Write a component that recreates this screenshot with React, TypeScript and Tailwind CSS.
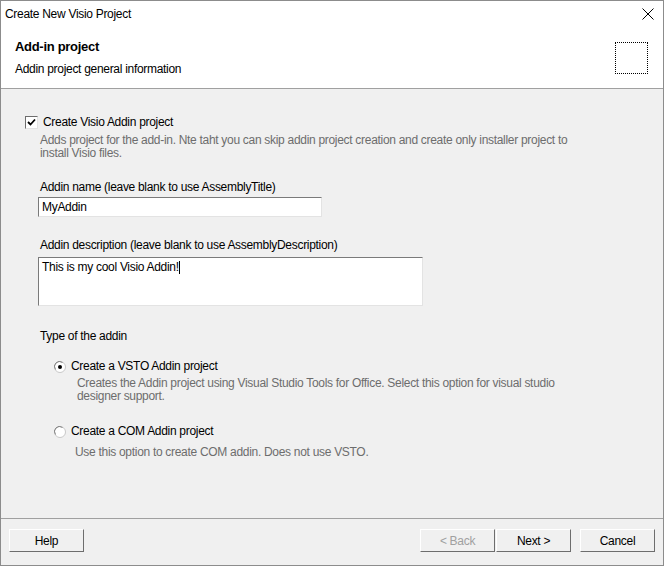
import React from 'react';

function Checkbox({ checked }: { checked: boolean }) {
    return (
        <div className="w-[13px] h-[13px] border border-t-[#6d6d6d] border-l-[#6d6d6d] border-b-[#e3e3e3] border-r-[#e3e3e3] bg-white flex items-center justify-center shrink-0">
            {checked && (
                <svg width="9" height="9" viewBox="0 0 9 9">
                    <path d="M1 4 L3.5 6.5 L8 1.5" stroke="#000" strokeWidth="1.8" fill="none" />
                </svg>
            )}
        </div>
    );
}

function Radio({ checked }: { checked: boolean }) {
    return (
        <svg width="12" height="12" viewBox="0 0 12 12" className="shrink-0">
            <circle cx="6" cy="6" r="5.5" fill="#fff" stroke="#c8c8c8" />
            <path d="M1.5 8.5 A5 5 0 0 1 8.5 1.5" stroke="#808080" fill="none" />
            {checked && <circle cx="6" cy="6" r="2" fill="#000" />}
        </svg>
    );
}

function WinButton({ children, disabled }: { children: React.ReactNode; disabled?: boolean }) {
    return (
        <button
            className={
                'w-[75px] h-[23px] bg-[#f0f0f0] border border-t-white border-l-white border-b-[#6d6d6d] border-r-[#6d6d6d] text-[12px] leading-none tracking-[-0.3px] ' +
                (disabled ? 'text-[#a0a0a0]' : 'text-black')
            }
        >
            {children}
        </button>
    );
}

export default function App() {
    return (
        <div className="w-[664px] h-[566px] border border-[#8c8c8c] bg-[#f0f0f0] flex flex-col text-[12px] tracking-[-0.3px] text-black font-['Liberation_Sans',Arial,sans-serif]">
            {/* header */}
            <div className="h-[88px] bg-white border-b border-[#a0a0a0] shrink-0 flex flex-col">
                <div className="h-[25px] flex items-center justify-between pl-[4px] pr-[9px]">
                    <span>Create New Visio Project</span>
                    <svg width="12" height="12" viewBox="0 0 12 12">
                        <path d="M0.5 0.5 L11.5 11.5 M11.5 0.5 L0.5 11.5" stroke="#000" strokeWidth="1" />
                    </svg>
                </div>
                <div className="flex justify-between pl-[14px] pr-[15px] pt-[13px]">
                    <div className="flex flex-col">
                        <span className="font-bold text-[13px] leading-[16px]">Add-in project</span>
                        <span className="leading-[14px] mt-[7px]">Addin project general information</span>
                    </div>
                    <div className="w-[33px] h-[32px] border border-dotted border-black mt-[3px]" />
                </div>
            </div>

            {/* content */}
            <div className="flex-1 leading-[13px]">
                <div className="flex items-center gap-[5px] ml-[24px] mt-[27px]">
                    <Checkbox checked />
                    <span>Create Visio Addin project</span>
                </div>
                <div className="ml-[39px] mt-[5px] w-[535px] text-[#6d6d6d]">
                    Adds project for the add-in. Nte taht you can skip addin project creation and create only installer project to install Visio files.
                </div>

                <div className="ml-[39px] mt-[21px]">Addin name (leave blank to use AssemblyTitle)</div>
                <div className="ml-[37px] mt-[3px] w-[284px] h-[20px] bg-white border border-t-[#7a7a7a] border-l-[#7a7a7a] border-b-[#e3e3e3] border-r-[#e3e3e3] px-[3px] flex items-center">
                    MyAddin
                </div>

                <div className="ml-[39px] mt-[22px]">Addin description (leave blank to use AssemblyDescription)</div>
                <div className="ml-[37px] mt-[5px] w-[385px] h-[49px] bg-white border border-t-[#7a7a7a] border-l-[#7a7a7a] border-b-[#e3e3e3] border-r-[#e3e3e3] px-[3px] pt-[3px]">
                    This is my cool Visio Addin!<span className="inline-block w-[1px] h-[13px] bg-black align-top" />
                </div>

                <div className="ml-[39px] mt-[24px]">Type of the addin</div>

                <div className="flex items-center gap-[5px] ml-[53px] mt-[17px]">
                    <Radio checked />
                    <span>Create a VSTO Addin project</span>
                </div>
                <div className="ml-[76px] mt-[4px] w-[490px] text-[#6d6d6d]">
                    Creates the Addin project using Visual Studio Tools for Office. Select this option for visual studio designer support.
                </div>

                <div className="flex items-center gap-[5px] ml-[53px] mt-[22px]">
                    <Radio checked={false} />
                    <span>Create a COM Addin project</span>
                </div>
                <div className="ml-[74px] mt-[8px] text-[#6d6d6d]">
                    Use this option to create COM addin. Does not use VSTO.
                </div>
            </div>

            {/* footer */}
            <div className="h-[47px] border-t border-[#a0a0a0] shrink-0 flex items-start pt-[10px] pl-[8px] pr-[8px]">
                <WinButton>Help</WinButton>
                <div className="flex-1" />
                <WinButton disabled>&lt; Back</WinButton>
                <div className="w-[1px]" />
                <WinButton>Next &gt;</WinButton>
                <div className="w-[9px]" />
                <WinButton>Cancel</WinButton>
            </div>
        </div>
    );
}
